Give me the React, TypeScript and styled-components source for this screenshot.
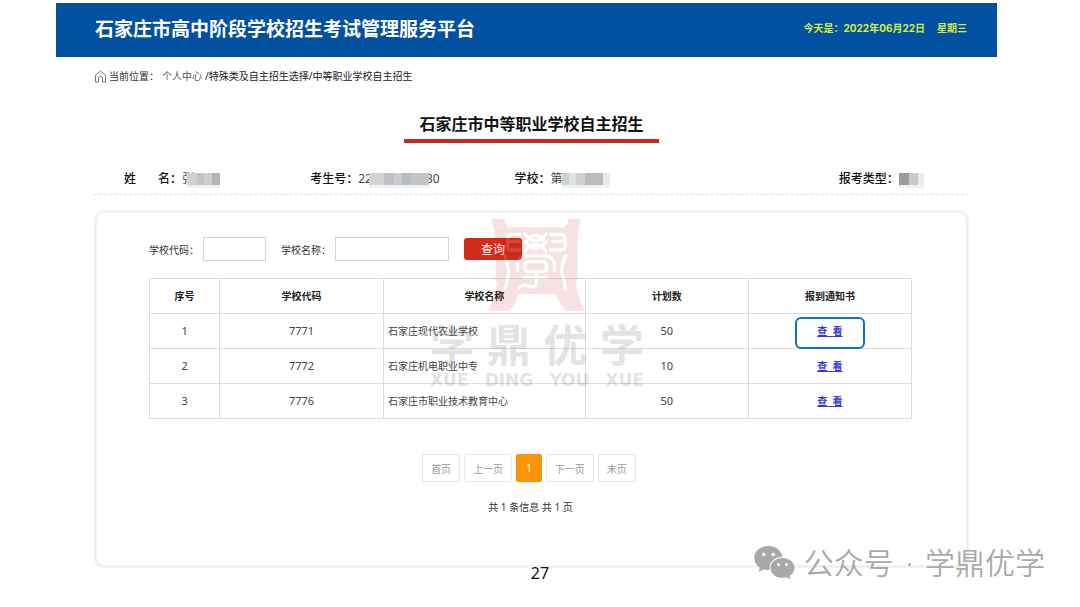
import React from 'react';
import styled, { createGlobalStyle } from 'styled-components';

const GlobalStyle = createGlobalStyle`
  * { box-sizing: border-box; }
  body {
    margin: 0;
    background: #fff;
    color: #333;
    font-family: "Noto Sans", "Noto Sans CJK SC", sans-serif;
    font-size: 10px;
  }
`;

const Page = styled.div`
  position: relative;
  padding-top: 3px;
`;

const Header = styled.header`
  display: flex;
  align-items: center;
  justify-content: space-between;
  height: 54px;
  margin: 0 83px 0 56px;
  padding: 0 30px 4px 39px;
  background: #0251a1;
`;

const SiteName = styled.div`
  color: #fff;
  font: bold 19px/28px "Noto Sans CJK SC", sans-serif;
`;

const Today = styled.div`
  display: flex;
  gap: 12px;
  color: #d3ee3c;
  font: bold 10px/16px Inter, "Noto Sans CJK SC", sans-serif;
`;

const Content = styled.main`
  margin: 0 111px 0 94px;
`;

const Crumbs = styled.nav`
  display: flex;
  align-items: center;
  gap: 3px;
  height: 18px;
  margin-top: 10px;
  color: #333;
  line-height: 18px;
`;

const CrumbLink = styled.a`
  color: #555;
  text-decoration: none;
`;

const CrumbPath = styled.span`
  color: #222;
`;

const Title = styled.h1`
  width: fit-content;
  margin: 22px auto 0;
  padding: 0 15px;
  border-bottom: 4px solid #c42a1e;
  color: #111;
  font: bold 16px/32px "Noto Sans CJK SC", sans-serif;
`;

const Student = styled.dl`
  display: grid;
  grid-template-columns: 186fr 204fr 324fr 130fr;
  align-items: center;
  height: 31px;
  margin: 21px 0 0;
  padding-left: 30px;
  border-bottom: 1px dashed #e2e2e2;
  font-size: 12px;
  line-height: 18px;
`;

const Field = styled.div`
  display: flex;
  align-items: center;
`;

const FieldName = styled.dt<{ $spread?: boolean }>`
  display: flex;
  gap: ${(p) => (p.$spread ? '22px' : '0')};
  color: #111;
  font-weight: 500;
`;

const FieldValue = styled.dd`
  display: flex;
  align-items: center;
  margin: 0;
  color: #444;
`;

const Mosaic = styled.span<{ $width: number; $tones: string; $over?: number }>`
  position: relative;
  width: ${(p) => p.$width}px;
  height: 12px;
  margin: 0 -${(p) => p.$over ?? 0}px 0 -${(p) => p.$over ?? 0}px;
  background: linear-gradient(90deg, ${(p) => p.$tones});
  box-shadow: 0 3px 0 #f1f1f1;
`;

const Card = styled.section`
  position: relative;
  margin-top: 15px;
  padding: 24px 54px 49px 52px;
  border: 3px solid #f1f1f1;
  border-radius: 10px;
`;

const Search = styled.form`
  display: flex;
  align-items: center;
  height: 24px;
`;

const SearchLabel = styled.label`
  display: flex;
  align-items: center;
  gap: 4px;
  margin-right: 15px;
  color: #333;
`;

const TextBox = styled.input<{ $width: number }>`
  width: ${(p) => p.$width}px;
  height: 24px;
  border: 1px solid #d4d4d4;
  background: #fff;
  font: inherit;
`;

const SearchButton = styled.button`
  width: 58px;
  height: 22px;
  padding: 0;
  border: 0;
  border-radius: 3px;
  background: #d32b1a;
  color: #fff;
  font: 12px/22px "Noto Sans CJK SC", sans-serif;
`;

const Table = styled.table`
  width: 100%;
  margin-top: 17px;
  border-collapse: collapse;
  table-layout: fixed;
`;

const HeadCell = styled.th<{ $share: number }>`
  width: ${(p) => p.$share}%;
  height: 35px;
  padding: 0 0 2px;
  border: 1px solid #dcdcdc;
  color: #222;
  font-weight: bold;
`;

const Cell = styled.td<{ $name?: boolean }>`
  position: relative;
  height: 35px;
  padding: 0 4px 2px;
  border: 1px solid #dcdcdc;
  color: #444;
  font-size: ${(p) => (p.$name ? '10px' : '11px')};
  text-align: ${(p) => (p.$name ? 'left' : 'center')};
`;

const ViewLink = styled.a`
  color: #3a35d8;
  font-size: 10px;
  font-weight: bold;
`;

const Highlight = styled.span`
  position: absolute;
  top: 3px;
  left: 50%;
  width: 70px;
  height: 32px;
  border: 2px solid #0a73c6;
  border-radius: 6px;
  transform: translateX(-50%);
  pointer-events: none;
`;

const Pager = styled.nav`
  display: flex;
  justify-content: center;
  gap: 4px;
  margin: 35px 3px 0 0;
`;

const PageButton = styled.button<{ $current?: boolean }>`
  height: 28px;
  padding: 0 ${(p) => (p.$current ? '9px' : '8px')};
  border: 1px solid ${(p) => (p.$current ? '#fb9507' : '#e6e6e6')};
  border-radius: 2px;
  background: ${(p) => (p.$current ? '#fb9507' : '#fff')};
  color: ${(p) => (p.$current ? '#fff' : '#999')};
  font: inherit;
`;

const Summary = styled.p`
  margin: 16px 0 0;
  color: #333;
  line-height: 18px;
  text-align: center;
`;

const Watermark = styled.div`
  position: absolute;
  top: 1px;
  left: 333px;
  width: 214px;
  pointer-events: none;
`;

const Seal = styled.svg`
  display: block;
  margin-left: 54px;
  opacity: 0.12;
`;

const MarkRow = styled.div<{ $latin?: boolean }>`
  display: flex;
  justify-content: space-between;
  color: rgba(110, 110, 110, 0.2);
  font: ${(p) =>
    p.$latin
      ? 'bold 17px/20px "DejaVu Sans", sans-serif'
      : 'bold 44px/54px "Noto Sans CJK SC", sans-serif'};
`;

const PageNumber = styled.footer`
  position: relative;
  margin-top: -5px;
  color: #111;
  font: 16px/20px "Noto Sans", sans-serif;
  text-align: center;
`;

const Account = styled.div`
  position: absolute;
  top: 541px;
  right: 35px;
  display: flex;
  align-items: center;
  gap: 9px;
  color: #a9a9a9;
  font: 350 30px/44px "Noto Sans", "Noto Sans CJK SC", sans-serif;
`;

const AccountName = styled.span`
  display: flex;
  gap: 12px;
`;

const schools = [
  { code: '7771', name: '石家庄现代农业学校', plan: 50 },
  { code: '7772', name: '石家庄机电职业中专', plan: 10 },
  { code: '7776', name: '石家庄市职业技术教育中心', plan: 50 },
];

const columns: [string, number][] = [
  ['序号', 9.2],
  ['学校代码', 21.5],
  ['学校名称', 26.5],
  ['计划数', 21.4],
  ['报到通知书', 21.4],
];

const HomeIcon = () => (
  <svg width="12" height="13" viewBox="0 0 12 13" fill="none" stroke="#777" aria-hidden="true">
    <path
      d="M1.500 5.200 6.500 1 11.500 5.200V12H8.500V8.200Q8.500 6.400 6.500 6.400T4.500 8.200V12H1.500Z"
      strokeLinejoin="round"
    />
  </svg>
);

const SealMark = () => (
  <Seal width="106" height="102" viewBox="0 0 318 306" aria-hidden="true">
    <path
      fill="#c8141e"
      d="M21 15H62Q63 32 74 40H241Q252 32 253 15H291Q280 50 280 90V190H291Q274 196 277 215Q283 260 304 288Q275 293 245 290Q222 262 215 240H102Q97 270 76 290Q45 293 12 288Q33 260 38 215Q40 196 22 190H35V90Q34 50 21 15Z"
    />
    <g fill="none" stroke="#fff" strokeWidth="10" strokeLinecap="round" strokeLinejoin="round">
      <path d="M107 62H80Q68 62 72 82H105M72 82Q66 108 80 108H107" />
      <path d="M200 62H232Q245 62 243 82H207M243 82Q247 108 232 108H200" />
      <path d="M124 60Q136 80 155 80T186 60M124 86Q140 64 155 64T186 86M124 112Q136 92 155 92T186 112M126 84Q140 104 155 104T184 84" />
      <path d="M101 170Q96 126 130 126H182Q216 126 211 170" />
      <path d="M122 158Q122 143 137 143H173Q188 143 188 158T173 173H137Q122 173 122 158Z" />
      <path d="M122 190H188M157 173V205Q155 224 136 217T104 221" />
      <path d="M61 124Q80 160 70 198L63 223" />
      <path d="M246 124Q227 160 237 190Q244 202 243 226" />
    </g>
  </Seal>
);

const ChatLogo = () => (
  <svg width="41" height="34" viewBox="0 0 41 34" aria-hidden="true">
    <path
      fill="#a9a9a9"
      d="M14.500 0C6.500 0 .3 5.200.3 12c0 4 2.100 7.300 5.500 9.500L4.800 26l5-2.600c1.900.6 3.900.8 6 .7C14 17 20.500 10.500 28.500 11 27.500 4.500 21.800 0 14.500 0Z"
    />
    <path
      fill="#a9a9a9"
      d="M28.500 12c-6.600 0-12 4.300-12 9.900s5.400 9.900 12 9.900c1.500 0 3-.2 4.300-.6l3.800 2.300-1-3.800c3-1.800 4.900-4.600 4.900-7.800 0-5.600-5.400-9.900-12-9.900Z"
    />
    <g fill="#fff">
      <circle cx="9.800" cy="8.500" r="1.800" />
      <circle cx="19.200" cy="8.500" r="1.800" />
      <circle cx="24.500" cy="18.500" r="1.500" />
      <circle cx="32.500" cy="18.500" r="1.500" />
    </g>
  </svg>
);

export default function App() {
  return (
    <Page>
      <GlobalStyle />
      <Header>
        <SiteName>石家庄市高中阶段学校招生考试管理服务平台</SiteName>
        <Today>
          <span>今天是：2022年06月22日</span>
          <span>星期三</span>
        </Today>
      </Header>

      <Content>
        <Crumbs>
          <HomeIcon />
          <span>当前位置：</span>
          <CrumbLink href="#">个人中心</CrumbLink>
          <CrumbPath>/特殊类及自主招生选择/中等职业学校自主招生</CrumbPath>
        </Crumbs>

        <Title>石家庄市中等职业学校自主招生</Title>

        <Student>
          <Field>
            <FieldName $spread>
              <span>姓</span>
              <span>名：</span>
            </FieldName>
            <FieldValue>
              张
              <Mosaic $width={33} $over={7} $tones="#d0d0d0 0 30%, #c2c4c4 30% 50%, #d0cccc 50% 75%, #b4b4b4 75%" />
            </FieldValue>
          </Field>
          <Field>
            <FieldName>考生号：</FieldName>
            <FieldValue>
              22
              <Mosaic $width={60} $over={3} $tones="#d6d2d2 0 25%, #bcc2c8 25% 42%, #ccc 42% 55%, #b4bcc4 55% 68%, #c4c4c4 68%" />
              30
            </FieldValue>
          </Field>
          <Field>
            <FieldName>学校：</FieldName>
            <FieldValue>
              第
              <Mosaic $width={48} $tones="#ccd2d2 0 14%, #e2e2e2 14% 30%, #ccd0cf 30% 48%, #b8bcba 48% 86%, #e8e8e8 86%" />
            </FieldValue>
          </Field>
          <Field>
            <FieldName>报考类型：</FieldName>
            <FieldValue>
              <Mosaic $width={25} $tones="#9c9c9c 0 38%, #c8c8c6 38% 74%, #eaeaea 74%" />
            </FieldValue>
          </Field>
        </Student>

        <Card>
          <Search onSubmit={(e) => e.preventDefault()}>
            <SearchLabel>
              学校代码：
              <TextBox type="text" name="code" $width={63} />
            </SearchLabel>
            <SearchLabel>
              学校名称：
              <TextBox type="text" name="name" $width={114} />
            </SearchLabel>
            <SearchButton type="submit">查询</SearchButton>
          </Search>

          <Table>
            <thead>
              <tr>
                {columns.map(([label, share]) => (
                  <HeadCell key={label} $share={share}>
                    {label}
                  </HeadCell>
                ))}
              </tr>
            </thead>
            <tbody>
              {schools.map((school, i) => (
                <tr key={school.code}>
                  <Cell>{i + 1}</Cell>
                  <Cell>{school.code}</Cell>
                  <Cell $name>{school.name}</Cell>
                  <Cell>{school.plan}</Cell>
                  <Cell>
                    <ViewLink href="#">查{'\u00a0\u00a0'}看</ViewLink>
                    {i === 0 && <Highlight />}
                  </Cell>
                </tr>
              ))}
            </tbody>
          </Table>

          <Pager>
            <PageButton>首页</PageButton>
            <PageButton>上一页</PageButton>
            <PageButton $current>1</PageButton>
            <PageButton>下一页</PageButton>
            <PageButton>末页</PageButton>
          </Pager>
          <Summary>共 1 条信息 共 1 页</Summary>

          <Watermark>
            <SealMark />
            <MarkRow>
              <span>学</span>
              <span>鼎</span>
              <span>优</span>
              <span>学</span>
            </MarkRow>
            <MarkRow $latin>
              <span>XUE</span>
              <span>DING</span>
              <span>YOU</span>
              <span>XUE</span>
            </MarkRow>
          </Watermark>
        </Card>
      </Content>

      <PageNumber>27</PageNumber>

      <Account>
        <ChatLogo />
        <AccountName>
          <span>公众号</span>
          <span>·</span>
          <span>学鼎优学</span>
        </AccountName>
      </Account>
    </Page>
  );
}
